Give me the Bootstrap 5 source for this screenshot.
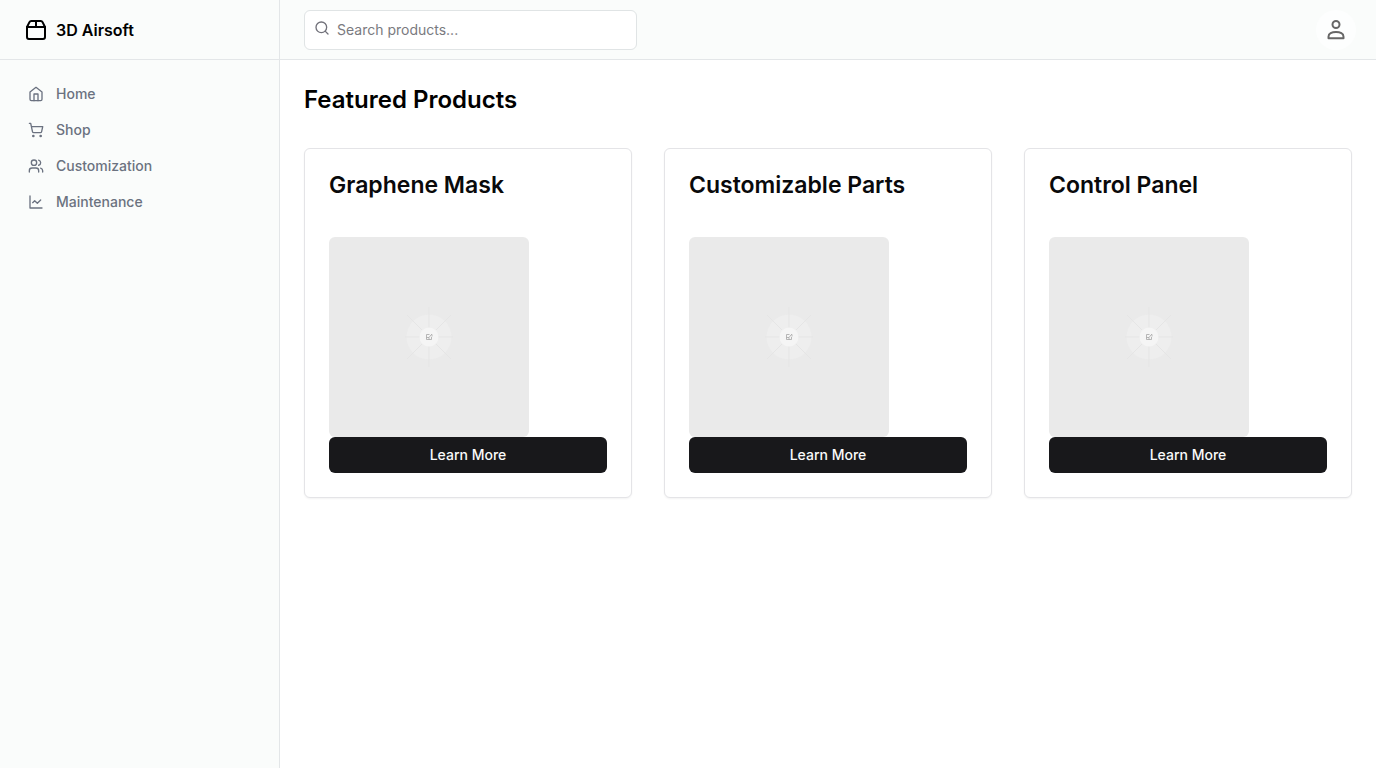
<!DOCTYPE html>
<html lang="en">
<head>
<meta charset="utf-8">
<meta name="viewport" content="width=device-width, initial-scale=1">
<title>3D Airsoft</title>
<link href="https://cdn.jsdelivr.net/npm/bootstrap@5.3.0/dist/css/bootstrap.min.css" rel="stylesheet">
<style>
  :root { --line: #e3e6e8; --bar: #fafcfb; }
  body { font-family: Inter, "Liberation Sans", sans-serif; font-size: 14px; line-height: 20px; color: #000; background: #fff; }
  .sidebar { width: 280px; background: var(--bar); border-right: 1px solid var(--line); }
  .topbar { height: 60px; border-bottom: 1px solid var(--line); }
  .page-header { background: var(--bar); padding-left: 24px; padding-right: 20px; gap: 12px; }
  .brand { font-size: 16px; font-weight: 600; line-height: 24px; color: #000; }
  .side-link { color: #6b7280; font-weight: 500; padding: 8px 12px; gap: 12px; }
  .side-link:hover { color: #111827; }
  .line-icon { fill: none; stroke: currentColor; stroke-width: 2; stroke-linecap: round; stroke-linejoin: round; flex: none; }
  .search-box { width: 33.3333%; }
  .search-box .line-icon { top: 10px; left: 10px; color: #71717a; }
  .search-input { height: 40px; padding: 8px 12px 8px 32px; font-size: 14px; border: 1px solid #e0e4e5; border-radius: 6px; }
  .search-input::placeholder { color: #7a7a80; }
  .avatar { width: 40px; height: 40px; background: #fdfefe; color: #666; }
  .page-title { font-size: 24px; line-height: 32px; font-weight: 600; }
  .products { row-gap: 32px; --bs-gutter-x: 32px; }
  .product { border: 1px solid #e4e4e7; border-radius: 6px; box-shadow: 0 1px 2px rgba(0,0,0,.05); color: #09090b; }
  .product-title { font-size: 23px; line-height: 24px; font-weight: 600; margin-bottom: 40px; }
  .product-picture { width: 200px; height: 200px; border-radius: 6px; background: #eaeaea; }
  .btn-learn { height: 36px; padding: 8px 16px; font-size: 14px; line-height: 20px; font-weight: 500; border: 0; border-radius: 6px; color: #fafafa; background: #18181b; }
  .btn-learn:hover { color: #fafafa; background: #2f2f33; }
</style>
</head>
<body>
<svg class="d-none" aria-hidden="true">
  <symbol id="placeholder" viewBox="0 0 200 200">
    <circle cx="100" cy="100" r="22.500" fill="#eeeeee"/>
    <path d="M100 70v60M76 100h48M78 78l44 44M122 78l-44 44" stroke="#e5e5e5" stroke-width="1" fill="none"/>
    <circle cx="100" cy="100" r="9.500" fill="#f5f5f5"/>
    <path d="M100.500 97.500h-3v5h5v-2.500M97.500 100.500h2.500l2-2.500M102 97.500h1v2M100 100.500v2" stroke="#a6a6a6" stroke-width=".8" fill="none"/>
  </symbol>
</svg>
<div class="d-flex min-vh-100">
  <aside class="sidebar flex-shrink-0">
    <div class="topbar d-flex align-items-center px-4">
      <a href="#" class="brand d-flex align-items-center gap-2 text-decoration-none">
        <svg class="line-icon" width="24" height="24" viewBox="0 0 24 24" aria-hidden="true"><path d="M3 9h18v10a2 2 0 0 1-2 2H5a2 2 0 0 1-2-2V9Z"/><path d="m3 9 2.450-4.900A2 2 0 0 1 7.240 3h9.520a2 2 0 0 1 1.800 1.100L21 9"/><path d="M12 3v6"/></svg>
        <span>3D Airsoft</span>
      </a>
    </div>
    <nav class="d-flex flex-column p-3" aria-label="Main">
      <a href="#" class="side-link d-flex align-items-center text-decoration-none">
        <svg class="line-icon" width="16" height="16" viewBox="0 0 24 24" aria-hidden="true"><path d="m3 9 9-7 9 7v11a2 2 0 0 1-2 2H5a2 2 0 0 1-2-2z"/><path d="M9 22V12h6v10"/></svg>
        <span>Home</span>
      </a>
      <a href="#" class="side-link d-flex align-items-center text-decoration-none">
        <svg class="line-icon" width="16" height="16" viewBox="0 0 24 24" aria-hidden="true"><circle cx="8" cy="21" r="1"/><circle cx="19" cy="21" r="1"/><path d="M2.050 2.050h2l2.660 12.420a2 2 0 0 0 2 1.580h9.780a2 2 0 0 0 1.950-1.570l1.650-7.430H5.120"/></svg>
        <span>Shop</span>
      </a>
      <a href="#" class="side-link d-flex align-items-center text-decoration-none">
        <svg class="line-icon" width="16" height="16" viewBox="0 0 24 24" aria-hidden="true"><path d="M16 21v-2a4 4 0 0 0-4-4H6a4 4 0 0 0-4 4v2"/><circle cx="9" cy="7" r="4"/><path d="M22 21v-2a4 4 0 0 0-3-3.870"/><path d="M16 3.130a4 4 0 0 1 0 7.750"/></svg>
        <span>Customization</span>
      </a>
      <a href="#" class="side-link d-flex align-items-center text-decoration-none">
        <svg class="line-icon" width="16" height="16" viewBox="0 0 24 24" aria-hidden="true"><path d="M3 3v18h18"/><path d="m19 9-5 5-4-4-3 3"/></svg>
        <span>Maintenance</span>
      </a>
    </nav>
  </aside>
  <div class="flex-grow-1 d-flex flex-column">
    <header class="topbar page-header d-flex align-items-center">
      <div class="flex-grow-1">
        <form class="search-box position-relative" role="search">
          <label for="search" class="d-block" aria-label="Search products">
            <svg class="line-icon position-absolute" width="16" height="16" viewBox="0 0 24 24" aria-hidden="true"><circle cx="11" cy="11" r="8"/><path d="m21 21-4.300-4.300"/></svg>
          </label>
          <input id="search" type="search" class="search-input form-control shadow-none" placeholder="Search products..." aria-label="Search products">
        </form>
      </div>
      <button type="button" class="avatar btn border-0 rounded-circle p-0 d-flex align-items-center justify-content-center" aria-label="User menu">
        <svg class="line-icon" width="24" height="24" viewBox="0 0 24 24" aria-hidden="true"><circle cx="12" cy="6.500" r="3.500"/><path d="M4.500 20.200v-1.500c0-3 3.300-4.700 7.500-4.700s7.500 1.700 7.500 4.700v1.500z"/></svg>
      </button>
    </header>
    <main class="p-4">
      <h1 class="page-title mb-0">Featured Products</h1>
      <div class="products row row-cols-1 row-cols-md-2 row-cols-lg-3 pt-3 mt-3">
        <div class="col">
          <article class="product card p-4">
            <h2 class="product-title">Graphene Mask</h2>
            <svg class="product-picture" role="img" aria-label="Graphene mask"><use href="#placeholder"/></svg>
            <button type="button" class="btn btn-learn w-100">Learn More</button>
          </article>
        </div>
        <div class="col">
          <article class="product card p-4">
            <h2 class="product-title">Customizable Parts</h2>
            <svg class="product-picture" role="img" aria-label="Customizable parts"><use href="#placeholder"/></svg>
            <button type="button" class="btn btn-learn w-100">Learn More</button>
          </article>
        </div>
        <div class="col">
          <article class="product card p-4">
            <h2 class="product-title">Control Panel</h2>
            <svg class="product-picture" role="img" aria-label="Control panel"><use href="#placeholder"/></svg>
            <button type="button" class="btn btn-learn w-100">Learn More</button>
          </article>
        </div>
      </div>
    </main>
  </div>
</div>
<script src="https://cdn.jsdelivr.net/npm/bootstrap@5.3.0/dist/js/bootstrap.bundle.min.js"></script>
</body>
</html>
